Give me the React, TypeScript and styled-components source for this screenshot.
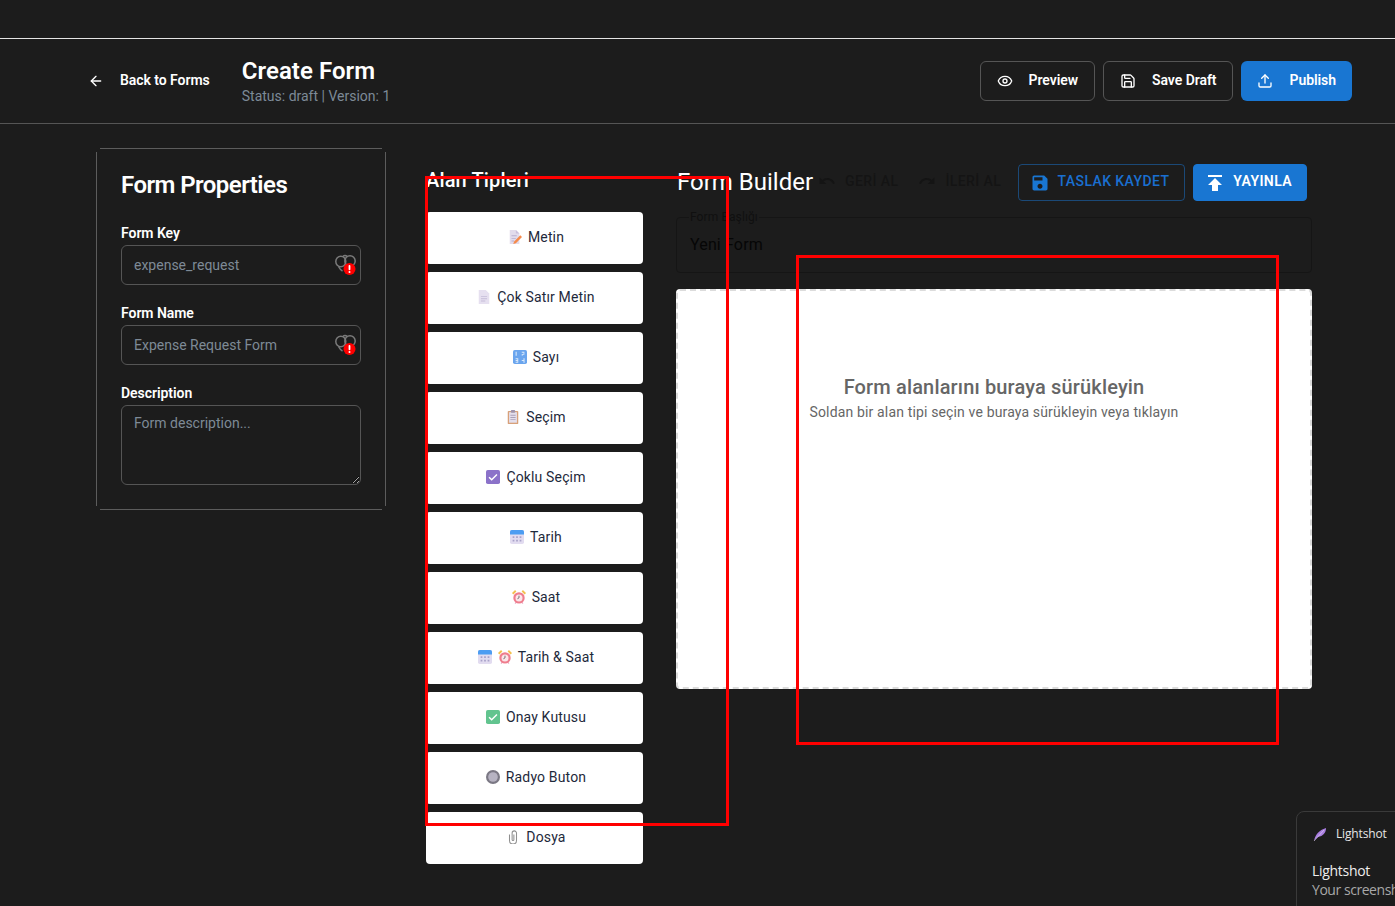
import React from "react";
import styled, { createGlobalStyle } from "styled-components";
import { ArrowLeft, Eye, Save, Upload } from "lucide-react";

const Global = createGlobalStyle`
  html, body { margin: 0; padding: 0; background: #1c1c1c; }
  body { font-family: Roboto, "Liberation Sans", sans-serif; color: #fff; overflow: hidden; }
  * { box-sizing: border-box; }
`;

const Page = styled.div`
  position: relative;
  width: 1395px;
  height: 906px;
  overflow: hidden;
  background: #1c1c1c;
`;
const TopStrip = styled.div`
  height: 39px;
  border-bottom: 1px solid #e4e4e4;
`;
const Header = styled.header`
  height: 85px;
  display: flex;
  align-items: center;
  justify-content: space-between;
  padding: 0 43px 0 88px;
  border-bottom: 1px solid #555;
`;
const HeaderLeft = styled.div`
  display: flex;
  align-items: center;
  gap: 32px;
`;
const BackLink = styled.a`
  display: flex;
  align-items: center;
  gap: 16px;
  font-size: 14px;
  font-weight: 600;
  letter-spacing: -0.05px;
  color: #fff;
`;
const NudgedLabel = styled.span`
  margin-top: -2px;
`;
const TitleBlock = styled.div`
  display: flex;
  flex-direction: column;
  margin-top: 2px;
`;
const PageTitle = styled.h1`
  margin: 0;
  font-size: 24px;
  line-height: 28px;
  font-weight: 600;
  letter-spacing: 0.05px;
`;
const Status = styled.div`
  font-size: 14px;
  line-height: 22px;
  color: #7d8a97;
`;
const HeaderActions = styled.div`
  display: flex;
  gap: 8px;
`;
const HeaderButton = styled.button<{ $primary?: boolean }>`
  height: 40px;
  display: flex;
  align-items: center;
  gap: 16px;
  padding: 0 16px;
  border-radius: 6px;
  border: ${(p) => (p.$primary ? "0" : "1px solid #555")};
  background: ${(p) => (p.$primary ? "#1976d2" : "transparent")};
  color: #fff;
  font: 600 14px Roboto, sans-serif;
  letter-spacing: -0.06px;
`;
const Main = styled.main`
  display: grid;
  grid-template-columns: 290px 217px 636px;
  column-gap: 33px;
  align-items: start;
  padding: 24px 0 0 96px;
`;
const PropertiesCard = styled.section`
  padding: 25px;
  margin-right: -7px;
  width: 290px;
  background:
    linear-gradient(#5c5c5c, #5c5c5c) top center / 282px 1px no-repeat,
    linear-gradient(#5c5c5c, #5c5c5c) bottom center / 282px 1px no-repeat,
    linear-gradient(#5c5c5c, #5c5c5c) left center / 1px 354px no-repeat,
    linear-gradient(#5c5c5c, #5c5c5c) right center / 1px 354px no-repeat;
`;
const CardTitle = styled.h2`
  margin: 0 0 28px;
  font-size: 24px;
  line-height: 24px;
  font-weight: 600;
  letter-spacing: -0.55px;
`;
const Field = styled.div`
  position: relative;
  margin-bottom: 20px;
  &:last-child { margin-bottom: 0; }
`;
const FieldLabel = styled.label`
  display: block;
  height: 20px;
  font-size: 14px;
  line-height: 17px;
  font-weight: 600;
  letter-spacing: -0.05px;
`;
const TextInput = styled.input`
  display: block;
  width: 100%;
  height: 40px;
  padding: 0 12px;
  background: transparent;
  border: 1px solid #555;
  border-radius: 6px;
  font: 400 14px Roboto, sans-serif;
  color: #fff;
  &::placeholder { color: #7e8a96; opacity: 1; }
`;
const TextArea = styled.textarea`
  display: block;
  width: 100%;
  height: 80px;
  padding: 9px 12px;
  background: transparent;
  border: 1px solid #555;
  border-radius: 6px;
  font: 400 14px Roboto, sans-serif;
  color: #fff;
  &::placeholder { color: #7e8a96; opacity: 1; }
`;
const AutofillBadge = styled.svg`
  position: absolute;
  right: 4px;
  top: 28px;
  width: 22px;
  height: 22px;
`;
const TypesColumn = styled.section`
  padding-top: 16px;
  margin-left: 7px;
  width: 217px;
`;
const ColumnTitle = styled.h3`
  margin: 0 0 16px;
  font-size: 20px;
  line-height: 32px;
  font-weight: 500;
  letter-spacing: 0.15px;
`;
const TypeList = styled.div`
  display: flex;
  flex-direction: column;
  gap: 8px;
`;
const TypeButton = styled.button`
  height: 52px;
  display: flex;
  align-items: center;
  justify-content: center;
  gap: 6px;
  padding: 0 0 2px 3px;
  background: #fff;
  border: 0;
  border-radius: 4px;
  color: #1e293b;
  font: 400 14px Roboto, sans-serif;
  letter-spacing: 0.15px;
`;
const TypeIcons = styled.span`
  display: flex;
  gap: 6px;
`;
const BuilderColumn = styled.section`
  padding-top: 16px;
  margin-left: 7px;
  width: 636px;
`;
const Toolbar = styled.div`
  height: 37px;
  display: flex;
  align-items: center;
  padding: 0 5px 0 1px;
  margin-bottom: 10px;
`;
const BuilderTitle = styled.h2`
  margin: 0 5px 2px 0;
  font-size: 24px;
  font-weight: 400;
  white-space: nowrap;
`;
const GhostButton = styled.span`
  display: flex;
  align-items: center;
  gap: 9px;
  margin: 0 20px 4px 0;
  font-size: 14px;
  font-weight: 500;
  letter-spacing: 0.4px;
  color: #141414;
  white-space: nowrap;
  svg { width: 18px; height: 18px; fill: #141414; }
  & + & { margin-right: 0; }
`;
const ToolbarActions = styled.div`
  display: flex;
  gap: 8px;
  margin-left: auto;
`;
const OutlinedAction = styled.button`
  height: 37px;
  display: flex;
  align-items: center;
  gap: 8px;
  padding: 0 15px 3px 11px;
  background: transparent;
  border: 1px solid rgba(25, 118, 210, 0.5);
  border-radius: 4px;
  color: #1a6fd0;
  font: 500 14px Roboto, sans-serif;
  letter-spacing: 0.4px;
  white-space: nowrap;
  svg { width: 20px; height: 20px; fill: #1976d2; margin-top: 3px; }
`;
const FilledAction = styled(OutlinedAction)`
  gap: 6px;
  padding: 0 14px 3px 9px;
  background: #1976d2;
  border-color: #1976d2;
  color: #fff;
  font-weight: 600;
  svg { width: 24px; height: 24px; fill: #fff; margin-top: 3px; }
`;
const TitleField = styled.fieldset`
  height: 62px;
  margin: 0 0 16px;
  padding: 0 13px;
  border: 1px solid #151515;
  border-radius: 4px;
  min-width: 0;
`;
const TitleLegend = styled.legend`
  padding: 0 1px;
  margin-left: -1px;
  font-size: 12px;
  line-height: 12px;
  letter-spacing: 0.1px;
  color: #101010;
`;
const TitleValue = styled.div`
  padding-top: 12px;
  font-size: 16px;
  letter-spacing: 0.15px;
  color: #060606;
`;
const DropZone = styled.div`
  height: 400px;
  padding-top: 82px;
  background: #fff;
  border: 2px dashed #dcdcdc;
  border-radius: 4px;
  text-align: center;
  color: #666;
`;
const DropTitle = styled.div`
  font-size: 20px;
  line-height: 28px;
  font-weight: 500;
  letter-spacing: 0.15px;
`;
const DropHint = styled.div`
  font-size: 14px;
  line-height: 22px;
  letter-spacing: 0.15px;
`;
const AnnotationBox = styled.div`
  position: absolute;
  border: 3px solid #f00;
  pointer-events: none;
`;
const TypesAnnotation = styled(AnnotationBox)`
  left: 425px;
  top: 176px;
  width: 304px;
  height: 650px;
`;
const CanvasAnnotation = styled(AnnotationBox)`
  left: 796px;
  top: 255px;
  width: 483px;
  height: 490px;
`;
const Toast = styled.aside`
  position: absolute;
  left: 1296px;
  top: 811px;
  width: 260px;
  height: 120px;
  padding: 14px 15px;
  background: #1c1c1c;
  border: 1px solid #3a3a3a;
  border-radius: 8px;
  font-family: "Open Sans", "Noto Sans", sans-serif;
`;
const ToastApp = styled.div`
  display: flex;
  align-items: center;
  gap: 9px;
  margin-left: 1px;
  font-size: 12px;
  line-height: 16px;
  letter-spacing: -0.15px;
  color: #e6e6e6;
`;
const ToastTitle = styled.div`
  margin-top: 19px;
  font-size: 14px;
  line-height: 19px;
  letter-spacing: -0.3px;
  color: #eee;
`;
const ToastBody = styled.div`
  font-size: 14px;
  line-height: 19px;
  letter-spacing: -0.45px;
  color: #a8a8a8;
  white-space: nowrap;
`;

const Glyph = styled.svg`
  width: 14px;
  height: 14px;
  flex: none;
  display: block;
`;

const MemoIcon = () => (
  <Glyph viewBox="0 0 16 16">
    <path d="M2 0h7l4 4v12H2z" fill="#e2dcec" />
    <path d="M9 0l4 4H9z" fill="#c9bfdc" />
    <path d="M4 6h6v1H4zM4 9h5v1H4zM4 12h3v1H4z" fill="#b8aed0" />
    <path d="M7 13l7-7 2 2-7 7-3 1z" fill="#f58a4b" />
  </Glyph>
);
const PageIcon = () => (
  <Glyph viewBox="0 0 16 16">
    <path d="M2 0h8l4 4v12H2z" fill="#e6e0f0" />
    <path d="M4.500 7h7v1h-7zM4.500 9.500h7v1h-7zM4.500 12h5v1h-5z" fill="#c5bcd8" />
  </Glyph>
);
const NumbersIcon = () => (
  <Glyph viewBox="0 0 16 16">
    <rect width="16" height="16" rx="2" fill="#6aa5ee" />
    <path d="M3 2h1.200v4.500H3zM10 2h3v1h-3zM12 3h1v1.500h-1zM10 4.500h3v1h-3zM10 5.500h1v1h-1zM3 9.500h3v1H3zM3 11.500h3v1H3zM3 13.500h3v1H3zM5 9.500h1v5H5zM12 9.500h1.200v5H12zM10 11.500h3v1h-3z" fill="#d9e9fb" />
  </Glyph>
);
const ClipboardIcon = () => (
  <Glyph viewBox="0 0 16 16">
    <rect x="2" y="1" width="12" height="15" rx="1" fill="#d8a17a" />
    <rect x="3.500" y="2.500" width="9" height="12" fill="#e4dfec" />
    <rect x="5.500" y="0" width="5" height="3" rx="1" fill="#9f94ad" />
    <path d="M5 5.500h6v1H5zM5 8h6v1H5zM5 10.500h6v1H5z" fill="#aaa1ba" />
  </Glyph>
);
const CheckIcon = ({ color }: { color: string }) => (
  <Glyph viewBox="0 0 16 16">
    <rect width="16" height="16" rx="2" fill={color} />
    <path d="M3.500 8.200l3 3 6-6" fill="none" stroke="#fff" strokeWidth="1.700" />
  </Glyph>
);
const CalendarIcon = () => (
  <Glyph viewBox="0 0 16 16">
    <rect y="0" width="16" height="16" rx="2" fill="#e2dcf0" />
    <path d="M0 2a2 2 0 012-2h12a2 2 0 012 2v3H0z" fill="#4d9df2" />
    <path d="M3 7h2v2H3zM7 7h2v2H7zM11 7h2v2h-2zM3 11h2v2H3zM7 11h2v2H7zM11 11h2v2h-2z" fill="#a9a3c9" />
  </Glyph>
);
const ClockIcon = () => (
  <Glyph viewBox="0 0 16 16">
    <path d="M3 15l1.500-2 1 .8L4 16zM13 15l-1.500-2-1 .8L12 16z" fill="#e8a9c4" />
    <circle cx="8" cy="9" r="6.500" fill="#ef7d8d" />
    <circle cx="8" cy="9" r="4" fill="#fbe6ea" />
    <path d="M8 6.500V9l-1.800 1" fill="none" stroke="#555" strokeWidth="0.900" />
    <path d="M0 3.500L3.500 0l1.500 1.800L1.500 5zM16 3.500L12.500 0 11 1.800 14.500 5z" fill="#f3c04d" />
  </Glyph>
);
const RadioIcon = () => (
  <Glyph viewBox="0 0 16 16">
    <circle cx="8" cy="8" r="8" fill="#7b7884" />
    <circle cx="8" cy="8" r="5.500" fill="#b7b3c2" />
  </Glyph>
);
const ClipIcon = () => (
  <Glyph viewBox="0 0 16 16">
    <path d="M4 5v7a4 4 0 008 0V3.500a2.500 2.500 0 00-5 0V11a1 1 0 002 0V5" fill="none" stroke="#8f8f8f" strokeWidth="1.200" />
  </Glyph>
);

const SaveFilled = () => (
  <svg viewBox="0 0 24 24">
    <path d="M17 3H5c-1.110 0-2 .9-2 2v14c0 1.100.89 2 2 2h14c1.100 0 2-.9 2-2V7l-4-4zm-5 16c-1.660 0-3-1.340-3-3s1.340-3 3-3 3 1.340 3 3-1.340 3-3 3zm3-10H5V5h10v4z" />
  </svg>
);
const PublishFilled = () => (
  <svg viewBox="0 0 24 24">
    <path d="M5 4v2h14V4H5zm0 10h4v6h6v-6h4l-7-7-7 7z" />
  </svg>
);
const UndoFilled = () => (
  <svg viewBox="0 0 24 24">
    <path d="M12.500 8c-2.650 0-5.050.99-6.900 2.600L2 7v9h9l-3.620-3.620c1.390-1.160 3.160-1.880 5.120-1.880 3.540 0 6.550 2.310 7.600 5.500l2.370-.78C21.080 11.030 17.150 8 12.500 8z" />
  </svg>
);
const RedoFilled = () => (
  <svg viewBox="0 0 24 24">
    <path d="M18.400 10.600C16.550 8.990 14.150 8 11.500 8c-4.650 0-8.580 3.030-9.960 7.220L3.900 16c1.050-3.190 4.050-5.500 7.600-5.500 1.950 0 3.730.72 5.120 1.880L13 16h9V7l-3.600 3.600z" />
  </svg>
);
const Autofill = () => (
  <AutofillBadge viewBox="0 0 22 22">
    <g fill="none" stroke="#7a7a7a" strokeWidth="1.500">
      <ellipse cx="5.800" cy="8.500" rx="5" ry="5.300" />
      <circle cx="15" cy="8" r="5.200" />
      <path d="M8 3.500c1-1.300 3-1.300 4 0" />
      <path d="M3.500 13.500c1 2 2.300 3.500 4 4.500" />
    </g>
    <circle cx="14.500" cy="16" r="6" fill="#f00" />
    <rect x="13.600" y="12" width="1.800" height="5.200" rx=".9" fill="#fff" />
    <circle cx="14.500" cy="19" r="1" fill="#fff" />
  </AutofillBadge>
);

const Feather = () => (
  <svg width="14" height="14" viewBox="0 0 14 14">
    <path d="M1 14C2 8 6 3 13 1c0 5-3 8-8 9l-3 2.500z" fill="#a97ee0" />
    <path d="M1 14L11 3" stroke="#e6d8f6" strokeWidth=".6" />
  </svg>
);

const fieldTypes: { label: string; icons: React.ReactNode[] }[] = [
  { label: "Metin", icons: [<MemoIcon key="a" />] },
  { label: "Çok Satır Metin", icons: [<PageIcon key="a" />] },
  { label: "Sayı", icons: [<NumbersIcon key="a" />] },
  { label: "Seçim", icons: [<ClipboardIcon key="a" />] },
  { label: "Çoklu Seçim", icons: [<CheckIcon key="a" color="#8b72c9" />] },
  { label: "Tarih", icons: [<CalendarIcon key="a" />] },
  { label: "Saat", icons: [<ClockIcon key="a" />] },
  { label: "Tarih & Saat", icons: [<CalendarIcon key="a" />, <ClockIcon key="b" />] },
  { label: "Onay Kutusu", icons: [<CheckIcon key="a" color="#62c48f" />] },
  { label: "Radyo Buton", icons: [<RadioIcon key="a" />] },
  { label: "Dosya", icons: [<ClipIcon key="a" />] },
];

export default function App() {
  return (
    <Page>
      <Global />
      <TopStrip />
      <Header>
        <HeaderLeft>
          <BackLink>
            <ArrowLeft size={16} />
            <NudgedLabel>Back to Forms</NudgedLabel>
          </BackLink>
          <TitleBlock>
            <PageTitle>Create Form</PageTitle>
            <Status>Status: draft | Version: 1</Status>
          </TitleBlock>
        </HeaderLeft>
        <HeaderActions>
          <HeaderButton>
            <Eye size={16} />
            <NudgedLabel>Preview</NudgedLabel>
          </HeaderButton>
          <HeaderButton>
            <Save size={16} />
            <NudgedLabel>Save Draft</NudgedLabel>
          </HeaderButton>
          <HeaderButton $primary>
            <Upload size={16} />
            <NudgedLabel>Publish</NudgedLabel>
          </HeaderButton>
        </HeaderActions>
      </Header>
      <Main>
        <PropertiesCard>
          <CardTitle>Form Properties</CardTitle>
          <Field>
            <FieldLabel>Form Key</FieldLabel>
            <TextInput placeholder="expense_request" />
            <Autofill />
          </Field>
          <Field>
            <FieldLabel>Form Name</FieldLabel>
            <TextInput placeholder="Expense Request Form" />
            <Autofill />
          </Field>
          <Field>
            <FieldLabel>Description</FieldLabel>
            <TextArea placeholder="Form description..." />
          </Field>
        </PropertiesCard>
        <TypesColumn>
          <ColumnTitle>Alan Tipleri</ColumnTitle>
          <TypeList>
            {fieldTypes.map((t) => (
              <TypeButton key={t.label}>
                <TypeIcons>{t.icons}</TypeIcons>
                {t.label}
              </TypeButton>
            ))}
          </TypeList>
        </TypesColumn>
        <BuilderColumn>
          <Toolbar>
            <BuilderTitle>Form Builder</BuilderTitle>
            <GhostButton>
              <UndoFilled />
              GERİ AL
            </GhostButton>
            <GhostButton>
              <RedoFilled />
              İLERİ AL
            </GhostButton>
            <ToolbarActions>
              <OutlinedAction>
                <SaveFilled />
                TASLAK KAYDET
              </OutlinedAction>
              <FilledAction>
                <PublishFilled />
                YAYINLA
              </FilledAction>
            </ToolbarActions>
          </Toolbar>
          <TitleField>
            <TitleLegend>Form Başlığı</TitleLegend>
            <TitleValue>Yeni Form</TitleValue>
          </TitleField>
          <DropZone>
            <DropTitle>Form alanlarını buraya sürükleyin</DropTitle>
            <DropHint>Soldan bir alan tipi seçin ve buraya sürükleyin veya tıklayın</DropHint>
          </DropZone>
        </BuilderColumn>
      </Main>
      <TypesAnnotation />
      <CanvasAnnotation />
      <Toast>
        <ToastApp>
          <Feather />
          Lightshot
        </ToastApp>
        <ToastTitle>Lightshot</ToastTitle>
        <ToastBody>Your screenshot was saved</ToastBody>
      </Toast>
    </Page>
  );
}
